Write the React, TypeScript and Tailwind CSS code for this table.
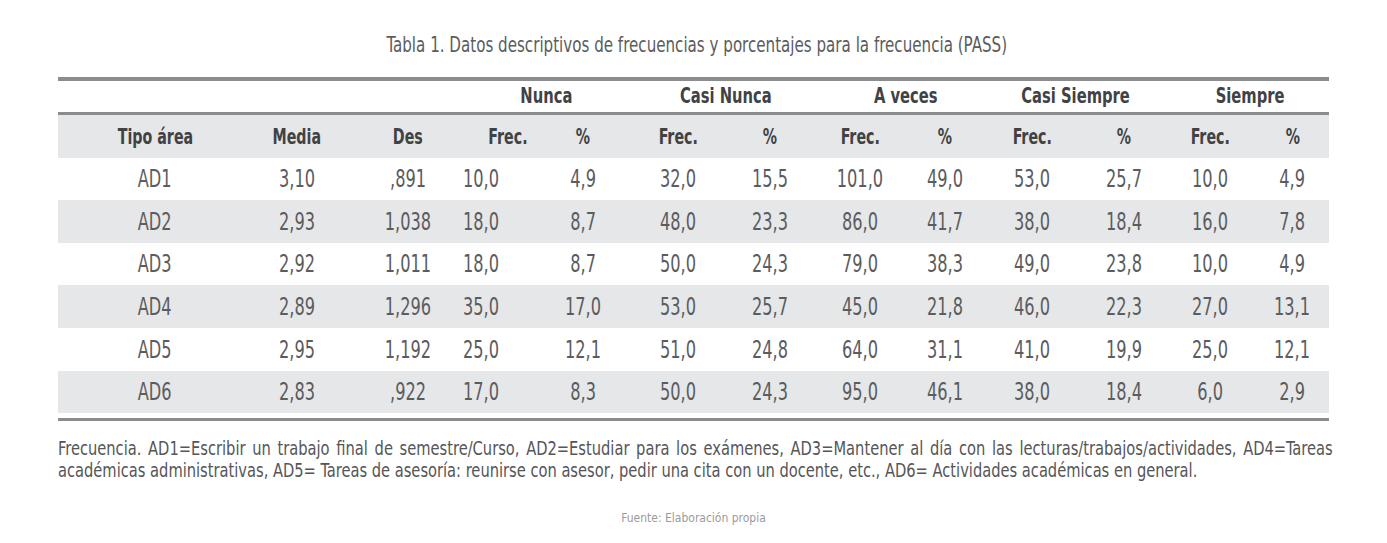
import React from "react";

const font = {
  fontFamily: "'DejaVu Sans Condensed', 'DejaVu Sans', sans-serif",
};

const cols =
  "grid grid-cols-[194px_90px_121px_73px_94px_96px_88px_92px_78px_96px_88px_84px_81px] items-center";

const rows = [
  { area: "AD1", h: "h-[42px]", bg: "bg-white", v: ["3,10", ",891", "10,0", "4,9", "32,0", "15,5", "101,0", "49,0", "53,0", "25,7", "10,0", "4,9"] },
  { area: "AD2", h: "h-[43px]", bg: "bg-[#e6e7e8]", v: ["2,93", "1,038", "18,0", "8,7", "48,0", "23,3", "86,0", "41,7", "38,0", "18,4", "16,0", "7,8"] },
  { area: "AD3", h: "h-[42px]", bg: "bg-white", v: ["2,92", "1,011", "18,0", "8,7", "50,0", "24,3", "79,0", "38,3", "49,0", "23,8", "10,0", "4,9"] },
  { area: "AD4", h: "h-[43px]", bg: "bg-[#e6e7e8]", v: ["2,89", "1,296", "35,0", "17,0", "53,0", "25,7", "45,0", "21,8", "46,0", "22,3", "27,0", "13,1"] },
  { area: "AD5", h: "h-[43px]", bg: "bg-white", v: ["2,95", "1,192", "25,0", "12,1", "51,0", "24,8", "64,0", "31,1", "41,0", "19,9", "25,0", "12,1"] },
  { area: "AD6", h: "h-[42px]", bg: "bg-[#e6e7e8]", v: ["2,83", ",922", "17,0", "8,3", "50,0", "24,3", "95,0", "46,1", "38,0", "18,4", "6,0", "2,9"] },
];

// alineacion por columna de valores (0 = Media)
const cellCls = [
  "text-center",
  "text-center pl-[11px]",
  "text-left",
  "text-center",
  "text-center",
  "text-center",
  "text-center",
  "text-center",
  "text-center",
  "text-center",
  "text-center",
  "text-center",
];

// la fuente original es muy condensada: se comprime el texto en horizontal
function Val({ left, children }: { left?: boolean; children: React.ReactNode }) {
  return (
    <span className={`inline-block scale-x-[0.75] ${left ? "origin-left" : "origin-center"}`}>
      {children}
    </span>
  );
}

function Head({ right, children }: { right?: boolean; children: React.ReactNode }) {
  return (
    <span className={`inline-block scale-x-[0.72] ${right ? "origin-right" : "origin-center"}`}>
      {children}
    </span>
  );
}

function Group({ children }: { children: React.ReactNode }) {
  return <span className="inline-block scale-x-[0.78] origin-center">{children}</span>;
}

export default function App() {
  return (
    <div className="w-[1387px] h-[543px] overflow-hidden bg-white text-[#5b5c5e]" style={font}>
      {/* titulo */}
      <div className="pt-[32px] h-[77px] text-center text-[21px] leading-[26px] pl-[6px]">
        <span className="inline-block scale-x-[0.8] origin-center">
          Tabla 1. Datos descriptivos de frecuencias y porcentajes para la frecuencia (PASS)
        </span>
      </div>

      <div className="mx-[58px]">
        <div className="h-[4px] bg-[#8b8c8e]" />

        {/* grupos */}
        <div className={`${cols} h-[31px] text-[21px] font-bold text-[#414244]`}>
          <div className="col-span-3" />
          <div className="col-span-2 text-center"><Group>Nunca</Group></div>
          <div className="col-span-2 text-center pl-[8px]"><Group>Casi Nunca</Group></div>
          <div className="col-span-2 text-center pl-[14px]"><Group>A veces</Group></div>
          <div className="col-span-2 text-center"><Group>Casi Siempre</Group></div>
          <div className="col-span-2 text-center"><Group>Siempre</Group></div>
        </div>

        <div className="h-[3px] bg-[#8b8c8e]" />

        {/* encabezado */}
        <div className={`${cols} h-[43px] bg-[#e6e7e8] text-[22px] font-bold text-[#414244]`}>
          <div className="text-center"><Head>Tipo área</Head></div>
          <div className="text-center"><Head>Media</Head></div>
          <div className="text-center pl-[11px]"><Head>Des</Head></div>
          <div className="text-right pr-[8px]"><Head right>Frec.</Head></div>
          <div className="text-center"><Head>%</Head></div>
          <div className="text-center"><Head>Frec.</Head></div>
          <div className="text-center"><Head>%</Head></div>
          <div className="text-center"><Head>Frec.</Head></div>
          <div className="text-center"><Head>%</Head></div>
          <div className="text-center"><Head>Frec.</Head></div>
          <div className="text-center"><Head>%</Head></div>
          <div className="text-center"><Head>Frec.</Head></div>
          <div className="text-center"><Head>%</Head></div>
        </div>

        {rows.map((r) => (
          <div key={r.area} className={`${cols} ${r.h} ${r.bg} text-[24px]`}>
            <div className="text-center"><Val>{r.area}</Val></div>
            {r.v.map((val, i) => (
              <div key={i} className={cellCls[i]}>
                <Val left={i === 2}>{val}</Val>
              </div>
            ))}
          </div>
        ))}

        <div className="h-[5px]" />
        <div className="h-[3px] bg-[#8b8c8e]" />

        {/* nota */}
        <div className="mt-[16px] w-[1564px] scale-x-[0.815] origin-left text-[20px] leading-[22px] text-[#555658]">
          <div className="text-justify [text-align-last:justify]">
            Frecuencia. AD1=Escribir un trabajo final de semestre/Curso, AD2=Estudiar para los exámenes, AD3=Mantener al día con las lecturas/trabajos/actividades, AD4=Tareas
          </div>
          <div>
            académicas administrativas, AD5= Tareas de asesoría: reunirse con asesor, pedir una cita con un docente, etc., AD6= Actividades académicas en general.
          </div>
        </div>

        <div className="mt-[28px] text-center text-[12px] text-[#9a9b9d]">
          Fuente: Elaboración propia
        </div>
      </div>
    </div>
  );
}
